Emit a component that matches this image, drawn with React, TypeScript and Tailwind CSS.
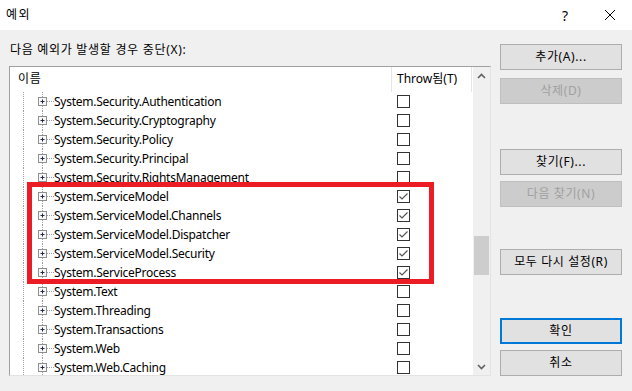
import React from 'react';

const rows: { name: string; checked: boolean }[] = [
  { name: 'System.Security.Authentication', checked: false },
  { name: 'System.Security.Cryptography', checked: false },
  { name: 'System.Security.Policy', checked: false },
  { name: 'System.Security.Principal', checked: false },
  { name: 'System.Security.RightsManagement', checked: false },
  { name: 'System.ServiceModel', checked: true },
  { name: 'System.ServiceModel.Channels', checked: true },
  { name: 'System.ServiceModel.Dispatcher', checked: true },
  { name: 'System.ServiceModel.Security', checked: true },
  { name: 'System.ServiceProcess', checked: true },
  { name: 'System.Text', checked: false },
  { name: 'System.Threading', checked: false },
  { name: 'System.Transactions', checked: false },
  { name: 'System.Web', checked: false },
  { name: 'System.Web.Caching', checked: false },
];

// 트리 연결선 + 펼치기 버튼
const TreeGlyph = () => (
  <svg width="44" height="19" className="flex-shrink-0">
    <line x1="13.5" y1="0" x2="13.5" y2="19" stroke="#a0a0a0" strokeDasharray="1 1" />
    <line x1="32.5" y1="0" x2="32.5" y2="19" stroke="#a0a0a0" strokeDasharray="1 1" />
    <line x1="37" y1="9.5" x2="44" y2="9.5" stroke="#a0a0a0" strokeDasharray="1 1" />
    <rect x="28.5" y="5.5" width="8" height="8" fill="#f7f7f7" stroke="#8e8f8f" />
    <line x1="30.5" y1="9.5" x2="34.5" y2="9.5" stroke="#1f2a44" />
    <line x1="32.5" y1="7.5" x2="32.5" y2="11.5" stroke="#1f2a44" />
  </svg>
);

const CheckBox = ({ checked }: { checked: boolean }) => (
  <div className="w-[13px] h-[13px] border border-[#333333] bg-white flex items-center justify-center">
    {checked && (
      <svg width="11" height="11" viewBox="0 0 11 11">
        <polyline points="1.5,5.5 4,8 9.5,2.5" fill="none" stroke="#555555" strokeWidth="1.2" />
      </svg>
    )}
  </div>
);

const Btn = ({ label, disabled, primary }: { label: string; disabled?: boolean; primary?: boolean }) => (
  <div
    className={`w-[122px] h-[26px] flex items-center justify-center text-[12px] tracking-[0.6px] ${
      primary
        ? 'border-2 border-[#0078d7] bg-[#e1e1e1] text-black'
        : disabled
        ? 'border border-[#bfbfbf] bg-[#cccccc] text-[#a0a0a0]'
        : 'border border-[#adadad] bg-[#e1e1e1] text-black'
    }`}
  >
    {label}
  </div>
);

export default function App() {
  return (
    <div className="relative w-[632px] h-[391px] bg-[#f0f0f0] overflow-hidden font-['Noto_Sans','Noto_Sans_CJK_KR',sans-serif] text-black">
      {/* 제목 표시줄 */}
      <div className="h-[30px] bg-white flex items-center pl-[6px] text-[12px]">
        <span className="tracking-[1.5px]">예외</span>
        <span className="ml-auto w-[12px] text-center text-[14px] mr-[33px]">?</span>
        <svg width="12" height="12" viewBox="0 0 12 12" className="mr-[16px]">
          <path d="M1 1 L11 11 M11 1 L1 11" stroke="#000" strokeWidth="1" />
        </svg>
      </div>

      <div className="flex pl-[9px]">
        {/* 왼쪽 */}
        <div className="w-[482px] flex flex-col">
          <div className="mt-[12px] h-[16px] leading-[16px] text-[12px] pl-[1px] tracking-[0.7px]">다음 예외가 발생할 경우 중단(X):</div>
          <div className="mt-[8px] h-[310px] flex border-t border-l border-[#a0a0a0] border-r border-b border-r-[#e3e3e3] border-b-[#e3e3e3] bg-white">
            <div className="flex-1 flex flex-col overflow-hidden">
              <div className="h-[25px] flex text-[12px] flex-shrink-0">
                <div className="w-[382px] border-r border-[#e5e5e5] pl-[8px] pt-[3px] tracking-[0.6px]">이름</div>
                <div className="w-[80px] border-r border-[#e5e5e5] pl-[5px] pt-[3px]">Throw됨(T)</div>
              </div>
              {rows.map((r) => (
                <div key={r.name} className="h-[19px] flex items-center flex-shrink-0 text-[12px]">
                  <div className="w-[382px] flex items-center">
                    <TreeGlyph />
                    <span className="whitespace-nowrap tracking-[-0.25px]">{r.name}</span>
                  </div>
                  <div className="pl-[5px]">
                    <CheckBox checked={r.checked} />
                  </div>
                </div>
              ))}
            </div>
            {/* 스크롤바 */}
            <div className="w-[17px] bg-[#f0f0f0] flex flex-col">
              <div className="h-[17px] flex items-center justify-center">
                <svg width="9" height="6" viewBox="0 0 9 6">
                  <path d="M1 5 L4.5 1.5 L8 5" fill="none" stroke="#606060" strokeWidth="1.6" />
                </svg>
              </div>
              <div className="flex-1 px-[1px]">
                <div className="mt-[152px] h-[39px] bg-[#cdcdcd]" />
              </div>
              <div className="h-[17px] flex items-center justify-center">
                <svg width="9" height="6" viewBox="0 0 9 6">
                  <path d="M1 1 L4.5 4.5 L8 1" fill="none" stroke="#606060" strokeWidth="1.6" />
                </svg>
              </div>
            </div>
          </div>
        </div>

        {/* 오른쪽 버튼 */}
        <div className="ml-[9px] pt-[14px] flex flex-col">
          <Btn label="추가(A)..." />
          <div className="mt-[8px]"><Btn label="삭제(D)" disabled /></div>
          <div className="mt-[45px]"><Btn label="찾기(F)..." /></div>
          <div className="mt-[6px]"><Btn label="다음 찾기(N)" disabled /></div>
          <div className="mt-[42px]"><Btn label="모두 다시 설정(R)" /></div>
          <div className="mt-[43px]"><Btn label="확인" primary /></div>
          <div className="mt-[6px]"><Btn label="취소" /></div>
        </div>
      </div>

      {/* 강조 표시 */}
      <div className="absolute left-[27px] top-[182px] w-[407px] h-[102px] border-[5px] border-[#ec1c24]" />
    </div>
  );
}
